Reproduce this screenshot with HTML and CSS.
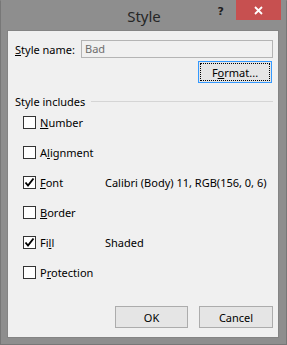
FILE: index.html
```html
<!DOCTYPE html>
<html>
<head>
<meta charset="utf-8">
<link rel="stylesheet" href="styles.css">
</head>
<body>
<div class="window">
  <div class="titlebar">
    <div class="spacer"></div>
    <div class="title">Style</div>
    <div class="controls">
      <span class="help">?</span>
      <span class="close">
        <svg width="9" height="9" viewBox="0 0 9 9"><path d="M1 1 L8 8 M8 1 L1 8" stroke="#fff" stroke-width="1.8" fill="none"/></svg>
      </span>
    </div>
  </div>
  <div class="dialog">
    <div class="name-row">
      <label class="label"><u>S</u>tyle name:</label>
      <div class="input">Bad</div>
    </div>
    <div class="format-row">
      <button class="btn focused"><span class="focus">F<u>o</u>rmat...</span></button>
    </div>
    <div class="group-head">
      <span>Style includes</span>
      <div class="line"></div>
    </div>
    <div class="checks">
      <div class="row"><span class="box"></span><span class="name"><u>N</u>umber</span></div>
      <div class="row"><span class="box"></span><span class="name">A<u>l</u>ignment</span></div>
      <div class="row"><span class="box"><svg width="11" height="11" viewBox="0 0 11 11"><path d="M1.5 5.5 L4 8.5 L9.5 1.5" stroke="#000" stroke-width="1.9" fill="none"/></svg></span><span class="name"><u>F</u>ont</span><span class="value">Calibri (Body) 11, RGB(156, 0, 6)</span></div>
      <div class="row"><span class="box"></span><span class="name"><u>B</u>order</span></div>
      <div class="row"><span class="box"><svg width="11" height="11" viewBox="0 0 11 11"><path d="M1.5 5.5 L4 8.5 L9.5 1.5" stroke="#000" stroke-width="1.9" fill="none"/></svg></span><span class="name">Fi<u>l</u>l</span><span class="value">Shaded</span></div>
      <div class="row"><span class="box"></span><span class="name">P<u>r</u>otection</span></div>
    </div>
    <div class="actions">
      <button class="btn">OK</button>
      <button class="btn">Cancel</button>
    </div>
  </div>
</div>
</body>
</html>
```
FILE: styles.css
```css
html, body {
  margin: 0;
  padding: 0;
}
body {
  width: 287px;
  height: 345px;
  overflow: hidden;
  font-family: "Noto Sans", "Open Sans", sans-serif;
  font-size: 11px;
  color: #000;
}
.window {
  box-sizing: border-box;
  width: 287px;
  height: 345px;
  background: #8e8e8e;
  border: 1px solid #777;
  border-top-color: #8e8e8e;
  padding: 0 7px 6px 6px;
  display: flex;
  flex-direction: column;
}
.titlebar {
  height: 30px;
  margin-top: -1px;
  display: grid;
  grid-template-columns: 1fr auto 1fr;
}
.title {
  font-size: 15px;
  color: #262626;
  line-height: 30px;
  padding-top: 1px;
  padding-left: 2px;
}
.controls {
  display: flex;
  justify-content: flex-end;
  align-items: flex-start;
  margin-right: -2px;
}
.help {
  font-family: "DejaVu Sans", sans-serif;
  font-weight: bold;
  font-size: 11px;
  color: #1e1e1e;
  line-height: 11px;
  margin-top: 6px;
  margin-right: 12px;
}
.close {
  width: 45px;
  height: 20px;
  background: #c75050;
  display: flex;
  align-items: center;
  justify-content: center;
}
.close svg { display: block; margin-top: 1px; }
.dialog {
  flex: 1;
  background: #f0f0f0;
  border: 1px solid #848484;
  padding: 9px 5px 0 7px;
  display: flex;
  flex-direction: column;
}
.name-row {
  display: flex;
  align-items: center;
  height: 18px;
}
.label {
  width: 66px;
}
.input {
  box-sizing: border-box;
  width: 192px;
  height: 18px;
  border: 1px solid #b4b4b4;
  background: #f0f0f0;
  color: #6d6d6d;
  padding-left: 3px;
  line-height: 16px;
}
.format-row {
  display: flex;
  justify-content: flex-end;
  margin-top: 3px;
  padding-right: 1px;
}
.btn {
  box-sizing: border-box;
  width: 74px;
  height: 22px;
  border: 1px solid #acacac;
  background: #e5e5e5;
  font-family: inherit;
  font-size: 11px;
  color: #000;
  padding: 0;
  display: flex;
  align-items: center;
  justify-content: center;
}
.btn.focused {
  border-color: #3399ff;
  padding: 1px;
}
.focus {
  box-sizing: border-box;
  width: 100%;
  height: 100%;
  border: 1px dotted #000;
  display: flex;
  align-items: center;
  justify-content: center;
}
.group-head {
  display: flex;
  align-items: center;
  height: 12px;
  margin-top: 12px;
}
.line {
  flex: 1;
  height: 1px;
  background: #d5d5d5;
  margin-left: 6px;
  margin-right: 0;
}
.checks {
  display: flex;
  flex-direction: column;
}
.row {
  height: 30px;
  display: flex;
  align-items: center;
  padding-left: 8px;
}
.box {
  box-sizing: border-box;
  flex: none;
  width: 13px;
  height: 13px;
  border: 1px solid #333;
  background: #fff;
  display: flex;
  align-items: center;
  justify-content: center;
}
.box svg { display: block; }
.name {
  flex: none;
  margin-left: 4px;
  width: 65px;
}
.value {
  white-space: nowrap;
}
.actions {
  display: flex;
  justify-content: flex-end;
  gap: 11px;
  margin-top: 19px;
  padding-right: 0;
}
.actions .btn {
  width: 73px;
}
.actions .btn:last-child {
  width: 74px;
}
```
